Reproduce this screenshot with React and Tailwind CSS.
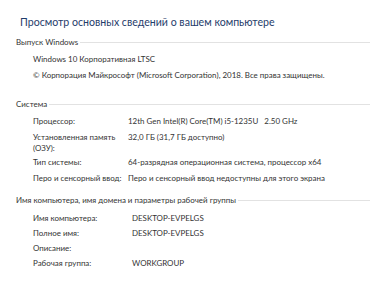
import React from "react";

const body = "text-[7.95px] leading-[11px] text-[#333]";

function Header({ children, className = "" }) {
  return (
    <div className={"flex items-center pl-[16px] " + className}>
      <span className={"whitespace-nowrap " + body}>{children}</span>
      <div className="ml-[2px] h-px flex-1 bg-[#e2e2e2]" />
    </div>
  );
}

function Row({ label, value, labelClass = "w-[95px]", className = "" }) {
  return (
    <div className={"flex items-start pl-[33px] " + body + " " + className}>
      <div className={"shrink-0 " + labelClass}>{label}</div>
      <div className="whitespace-pre">{value}</div>
    </div>
  );
}

export default function App() {
  return (
    <div
      className="h-[281px] w-[370px] overflow-hidden bg-white"
      style={{ fontFamily: 'Lato, "Noto Sans", sans-serif' }}
    >
      <div className="pl-[20px] pt-[15px] text-[10.6px] leading-[14px] text-[#1f3d6b]">
        Просмотр основных сведений о вашем компьютере
      </div>

      <Header className="mt-[8px]">Выпуск Windows</Header>
      <div className={"mt-[6px] pl-[33px] " + body}>Windows 10 Корпоративная LTSC</div>
      <div className={"mt-[5px] whitespace-nowrap pl-[33px] " + body}>
        © Корпорация Майкрософт (Microsoft Corporation), 2018. Все права защищены.
      </div>

      <Header className="mt-[18px]">Система</Header>
      <Row className="mt-[6px]" label="Процессор:" value="12th Gen Intel(R) Core(TM) i5-1235U   2.50 GHz" />
      <Row
        className="mt-[5px]"
        label={
          <>
            Установленная память
            <br />
            (ОЗУ):
          </>
        }
        value="32,0 ГБ (31,7 ГБ доступно)"
      />
      <Row className="mt-[3px]" label="Тип системы:" value="64-разрядная операционная система, процессор x64" />
      <Row
        className="mt-[4.5px]"
        labelClass="min-w-[95px] whitespace-nowrap pr-[3px]"
        label="Перо и сенсорный ввод:"
        value="Перо и сенсорный ввод недоступны для этого экрана"
      />

      <Header className="mt-[11.5px]">Имя компьютера, имя домена и параметры рабочей группы</Header>
      <Row className="mt-[7px]" labelClass="w-[99px]" label="Имя компьютера:" value="DESKTOP-EVPELGS" />
      <Row className="mt-[4px]" labelClass="w-[99px]" label="Полное имя:" value="DESKTOP-EVPELGS" />
      <Row className="mt-[4px]" labelClass="w-[99px]" label="Описание:" value="" />
      <Row className="mt-[4px]" labelClass="w-[99px]" label="Рабочая группа:" value="WORKGROUP" />
    </div>
  );
}
